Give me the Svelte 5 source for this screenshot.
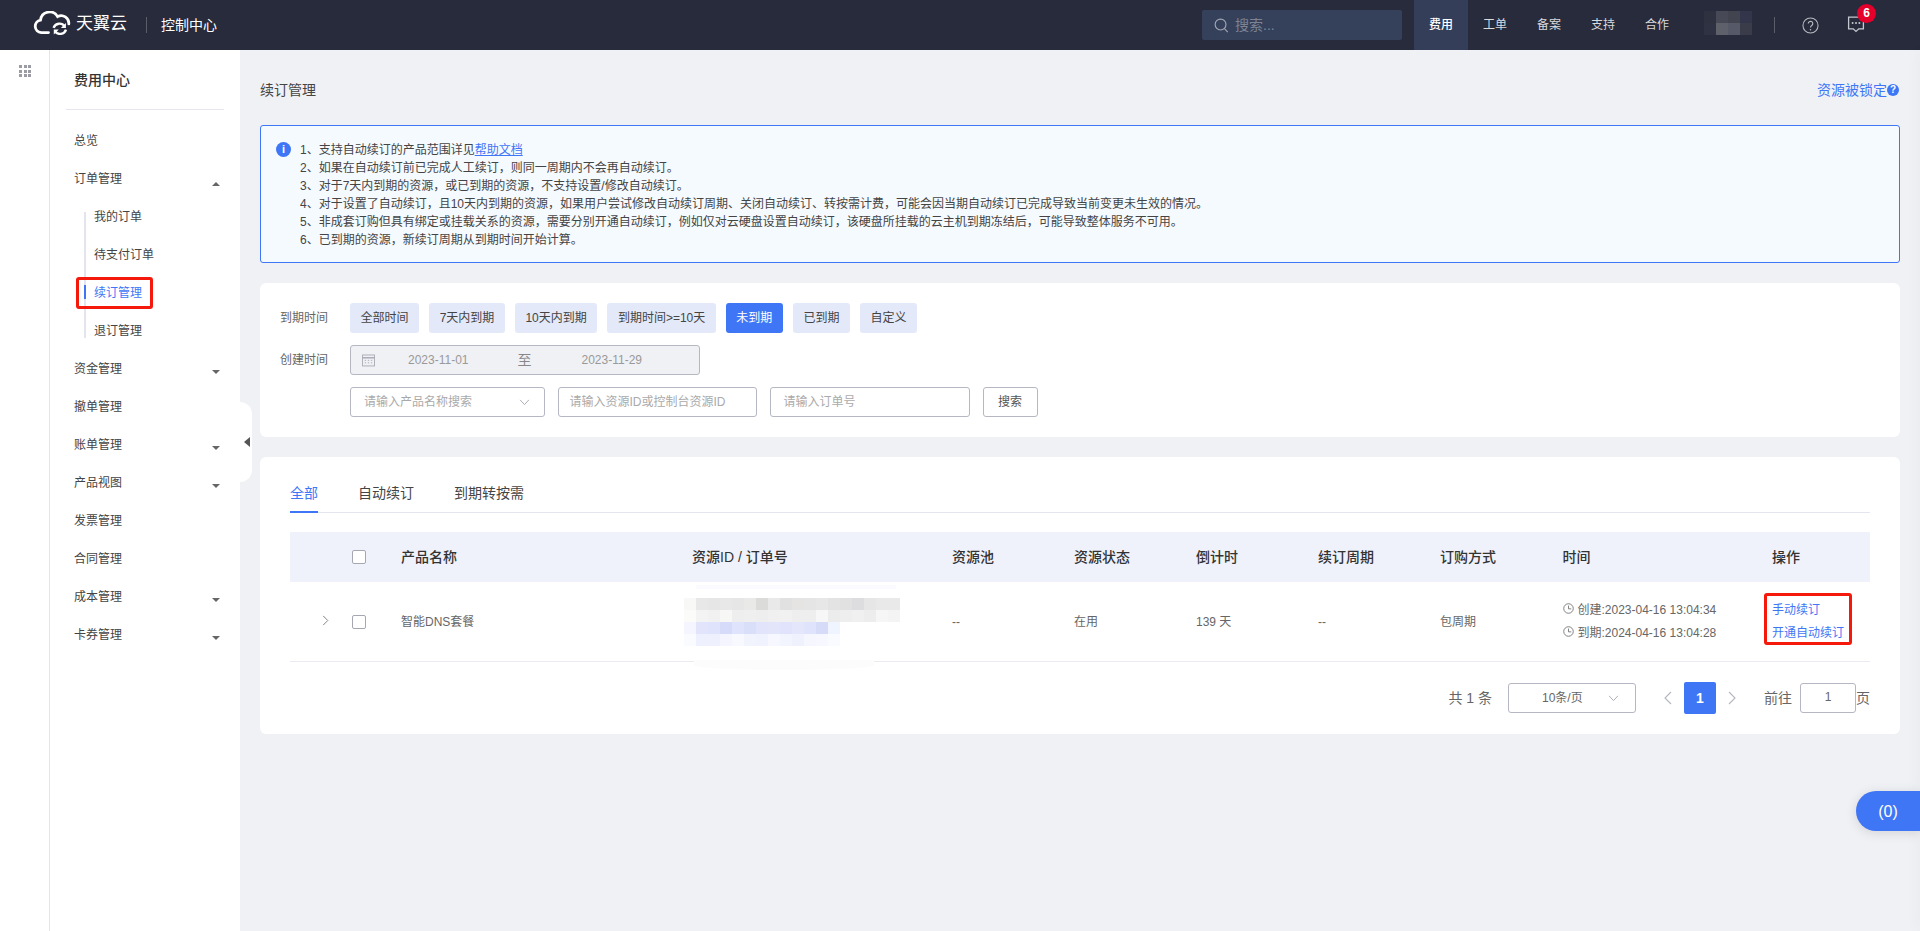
<script>
  const menu = [
    { label: '总览' },
    { label: '订单管理', caret: 'up', children: ['我的订单', '待支付订单', '续订管理', '退订管理'] },
    { label: '资金管理', caret: 'down' },
    { label: '撤单管理' },
    { label: '账单管理', caret: 'down' },
    { label: '产品视图', caret: 'down' },
    { label: '发票管理' },
    { label: '合同管理' },
    { label: '成本管理', caret: 'down' },
    { label: '卡券管理', caret: 'down' }
  ];
  const notes = [
    '2、如果在自动续订前已完成人工续订，则同一周期内不会再自动续订。',
    '3、对于7天内到期的资源，或已到期的资源，不支持设置/修改自动续订。',
    '4、对于设置了自动续订，且10天内到期的资源，如果用户尝试修改自动续订周期、关闭自动续订、转按需计费，可能会因当期自动续订已完成导致当前变更未生效的情况。',
    '5、非成套订购但具有绑定或挂载关系的资源，需要分别开通自动续订，例如仅对云硬盘设置自动续订，该硬盘所挂载的云主机到期冻结后，可能导致整体服务不可用。',
    '6、已到期的资源，新续订周期从到期时间开始计算。'
  ];
  const ranges = ['全部时间', '7天内到期', '10天内到期', '到期时间>=10天', '未到期', '已到期', '自定义'];
  const heads = ['产品名称', '资源ID / 订单号', '资源池', '资源状态', '倒计时', '续订周期', '订购方式', '时间', '操作'];
  const nav = ['费用', '工单', '备案', '支持', '合作'];
  const mosaicGray = [
    ['#f8f8f7','#e8e8e8','#e6e6e6','#e8e8e8','#e6e6e6','#e9e9e8','#dbdbd9','#e9e9e9','#e1e1e2','#e5e4e3','#e5e5e5','#e7e7e7','#e3e3e3','#e1e1e1','#dddde0','#e6e6e6','#e9e9e9','#e9e9e9'],
    ['#fbfbfa','#f3f3f3','#f1f1f1','#f7f7f6','#eeeeee','#efefef','#eeeeee','#f0f0f0','#f1f1f1','#eeeeee','#eeeeee','#f7f7f7','#ececed','#eeeeee','#f0f0f0','#ededed','#f6f6f6','#f4f4f4']
  ];
  const mosaicBlue = [
    ['#f4f5fe','#e1e4fb','#dfe3fb','#d6dbf9','#dfe3fb','#d9def9','#e1e4fb','#e3e6fb','#e0e3fb','#e4e7fc','#dfe3fb','#d6dbf8','#f0f4ff'],
    ['#fafbff','#eef0fd','#eef0fd','#f4f5fe','#f8f9ff','#f1f3fd','#f0f2fd','#f7f8ff','#f2f4fe','#eff1fd','#f5f6fe','#f7f8ff','#fafbff']
  ];
  const avatar = ['#2d3140','#474a56','#42454f','#33364a','#2e3242','#5e6169','#565a68','#3a3c4a'];
</script>

<div class="page">
  <header class="topbar">
    <div class="brand">
      <svg class="logo" viewBox="0 0 38 24" aria-hidden="true">
        <path d="M15.5 21.6H8.2a6.3 6.3 0 0 1-.7-12.5A9.2 9.2 0 0 1 24.6 5.6a7.6 7.6 0 0 1 11.2 7.2" fill="none" stroke="#fff" stroke-width="2.8" stroke-linecap="round"/>
        <path d="M20.6 16.8a6.2 6.2 0 0 1 11-1.4M33 18.6a6.2 6.2 0 0 1-11 1.6" fill="none" stroke="#fff" stroke-width="2.4"/>
        <path d="M32.9 11.9v5h-5zM20.8 23.4v-5h5z" fill="#fff"/>
      </svg>
      <span class="brand-name">天翼云</span>
      <i class="bar-line brand-line"></i>
      <span class="console">控制中心</span>
    </div>
    <div class="top-right">
      <div class="search">
        <svg viewBox="0 0 16 16" width="15" height="15" aria-hidden="true"><circle cx="7" cy="7" r="5.8" fill="none" stroke="#a3a8b4" stroke-width="1.2"/><path d="M11.2 11.4 14.6 15" stroke="#a3a8b4" stroke-width="1.2"/></svg>
        <span>搜索...</span>
      </div>
      <nav class="nav">
        {#each nav as n, i}
          <a class:on={i === 0} href="#top">{n}</a>
        {/each}
      </nav>
      <div class="avatar">
        {#each avatar as c}<i style="background:{c}"></i>{/each}
      </div>
      <i class="bar-line user-line"></i>
      <svg class="help" viewBox="0 0 18 18" width="17" height="17" aria-hidden="true"><circle cx="9" cy="9" r="8" fill="none" stroke="#b9bbc3" stroke-width="1.1"/><path d="M6.6 7a2.4 2.4 0 1 1 3.7 2c-.9.6-1.3 1-1.3 2.2" fill="none" stroke="#b9bbc3" stroke-width="1.2"/><circle cx="9" cy="13.4" r=".8" fill="#b9bbc3"/></svg>
      <div class="msg">
        <svg viewBox="0 0 18 18" width="18" height="18" aria-hidden="true"><path d="M1.6 2.2h14.8v11.6h-4.7L9 16.4l-2.7-2.6H1.6z" fill="none" stroke="#c6c8cf" stroke-width="1.3"/><circle cx="5.6" cy="8" r="1" fill="#c6c8cf"/><circle cx="9" cy="8" r="1" fill="#c6c8cf"/><circle cx="12.4" cy="8" r="1" fill="#c6c8cf"/></svg>
        <b class="badge">6</b>
      </div>
    </div>
  </header>

  <div class="body">
    <div class="rail">
      <div class="apps">{#each Array(9) as _}<i></i>{/each}</div>
    </div>

    <aside class="side">
      <div class="side-title"><span>费用中心</span></div>
      <ul class="menu">
        {#each menu as m}
          <li>
            <div class="item">
              <span>{m.label}</span>
              {#if m.caret}<i class="caret {m.caret}"></i>{/if}
            </div>
            {#if m.children}
              <ul class="sub">
                {#each m.children as c}
                  <li class:active={c === '续订管理'}>{c}</li>
                {/each}
              </ul>
            {/if}
          </li>
        {/each}
      </ul>
      <div class="handle"><i></i></div>
    </aside>

    <main class="main">
      <div class="title-row">
        <h1>续订管理</h1>
        <a class="locked" href="#top">资源被锁定<b>?</b></a>
      </div>

      <section class="alert">
        <span class="info">i</span>
        <div class="notes">
          <p>1、支持自动续订的产品范围详见<a href="#top">帮助文档</a></p>
          {#each notes as n}<p>{n}</p>{/each}
        </div>
      </section>

      <section class="card filter">
        <div class="f-row">
          <label for="r0">到期时间</label>
          <div class="ranges" id="r0">
            {#each ranges as r}
              <button class:sel={r === '未到期'}>{r}</button>
            {/each}
          </div>
        </div>
        <div class="f-row">
          <label for="d0">创建时间</label>
          <div class="dates" id="d0">
            <svg viewBox="0 0 14 14" width="13" height="14" aria-hidden="true"><rect x=".6" y="1.6" width="12.8" height="11.8" fill="none" stroke="#a9abb5"/><path d="M.6 4.6h12.8" stroke="#a9abb5" stroke-width="1.6"/><path d="M3 7.4h1.4M6.3 7.4h1.4M9.6 7.4h1.4M3 10h1.4M6.3 10h1.4M9.6 10h1.4" stroke="#a9abb5"/></svg>
            <span class="d1">2023-11-01</span>
            <span class="to">至</span>
            <span class="d2">2023-11-29</span>
          </div>
        </div>
        <div class="f-row">
          <span class="lab-empty"></span>
          <div class="fields">
            <div class="field sel1"><span>请输入产品名称搜索</span>
              <svg viewBox="0 0 12 8" width="11" height="7" aria-hidden="true"><path d="M1 1l5 5.4L11 1" fill="none" stroke="#a9abb5" stroke-width="1.1"/></svg>
            </div>
            <div class="field f2"><span>请输入资源ID或控制台资源ID</span></div>
            <div class="field f3"><span>请输入订单号</span></div>
            <button class="go">搜索</button>
          </div>
        </div>
      </section>

      <section class="card list">
        <div class="tabs">
          <span class="tab on">全部</span>
          <span class="tab">自动续订</span>
          <span class="tab">到期转按需</span>
        </div>

        <div class="grid head">
          <span></span>
          <i class="check"></i>
          {#each heads as h}<span>{h}</span>{/each}
        </div>

        <div class="grid row">
          <svg class="expand" viewBox="0 0 7 12" width="7" height="11" aria-hidden="true"><path d="M1 1l5 5-5 5" fill="none" stroke="#777" stroke-width="1"/></svg>
          <i class="check"></i>
          <span>智能DNS套餐</span>
          <div class="mosaic">
            <div class="halo top"></div>
            {#each mosaicGray as r}
              <div class="m-row">{#each r as c}<i style="background:{c}"></i>{/each}</div>
            {/each}
            {#each mosaicBlue as r}
              <div class="m-row">{#each r as c}<i style="background:{c}"></i>{/each}</div>
            {/each}
            <div class="halo bot"></div>
          </div>
          <span>--</span>
          <span>在用</span>
          <span>139 天</span>
          <span>--</span>
          <span>包周期</span>
          <div class="times">
            <div>
              <svg viewBox="0 0 12 12" width="11" height="11" aria-hidden="true"><circle cx="6" cy="6" r="5.2" fill="none" stroke="#777"/><path d="M6 2.8V6.4H9" fill="none" stroke="#777"/></svg>
              创建:2023-04-16 13:04:34
            </div>
            <div>
              <svg viewBox="0 0 12 12" width="11" height="11" aria-hidden="true"><circle cx="6" cy="6" r="5.2" fill="none" stroke="#777"/><path d="M6 2.8V6.4H9" fill="none" stroke="#777"/></svg>
              到期:2024-04-16 13:04:28
            </div>
          </div>
          <div class="ops">
            <a href="#top">手动续订</a>
            <a href="#top">开通自动续订</a>
          </div>
        </div>

        <div class="pager">
          <span class="total">共 1 条</span>
          <div class="p-size"><span>10条/页</span>
            <svg viewBox="0 0 12 8" width="11" height="7" aria-hidden="true"><path d="M1 1l5 5.4L11 1" fill="none" stroke="#a9abb5" stroke-width="1.1"/></svg>
          </div>
          <span class="p-arrow"><svg viewBox="0 0 8 14" width="8" height="14" aria-hidden="true"><path d="M7 1 1 7l6 6" fill="none" stroke="#b4b6bf" stroke-width="1.1"/></svg></span>
          <b class="p-cur">1</b>
          <span class="p-arrow"><svg viewBox="0 0 8 14" width="8" height="14" aria-hidden="true"><path d="M1 1l6 6-6 6" fill="none" stroke="#b4b6bf" stroke-width="1.1"/></svg></span>
          <span class="goto">前往</span>
          <span class="p-input">1</span>
          <span class="page-unit">页</span>
        </div>
      </section>
    </main>
  </div>

  <div class="edge"></div>
  <div class="cart">(0)</div>
</div>

<style>
  :global(body) {
    margin: 0;
    background: #f0f1f5;
  }
  *,
  *::before,
  *::after {
    box-sizing: border-box;
  }
  a {
    text-decoration: none;
    color: inherit;
  }
  i {
    display: block;
    font-style: normal;
  }
  .page {
    position: relative;
    width: 1920px;
    height: 931px;
    overflow: hidden;
    font: 12px/18px "Liberation Sans", "Noto Sans CJK SC", sans-serif;
    color: #444;
    background: #f0f1f5;
  }

  /* top bar */
  .topbar {
    display: flex;
    justify-content: space-between;
    height: 50px;
    background: #272b3b;
  }
  .brand {
    display: flex;
    align-items: center;
    padding-left: 33px;
    color: #fff;
  }
  .logo {
    width: 38px;
    height: 24px;
    margin-top: -4px;
  }
  .brand-name {
    margin-left: 5px;
    font-size: 17px;
    line-height: 24px;
    margin-top: -2px;
  }
  .bar-line {
    width: 1px;
    height: 16px;
    background: #5a5e6b;
  }
  .brand-line {
    margin-left: 19px;
  }
  .console {
    margin-left: 14px;
    font-size: 14px;
  }
  .top-right {
    display: flex;
    align-items: center;
    padding-right: 55px;
  }
  .search {
    display: flex;
    align-items: center;
    gap: 6px;
    width: 200px;
    height: 30px;
    padding-left: 12px;
    border-radius: 2px;
    background: #35405a;
    color: #7d8393;
    font-size: 14px;
  }
  .nav {
    display: flex;
    align-self: stretch;
    margin-left: 12px;
  }
  .nav a {
    width: 54px;
    line-height: 50px;
    text-align: center;
    color: #d9dade;
  }
  .nav a.on {
    background: #343e58;
    color: #fff;
    font-weight: 500;
  }
  .avatar {
    display: grid;
    grid-template-columns: repeat(4, 12px);
    grid-auto-rows: 12px;
    margin-left: 20px;
    margin-bottom: 4px;
  }
  .user-line {
    margin-left: 22px;
  }
  .help {
    margin-left: 27px;
  }
  .msg {
    position: relative;
    display: flex;
    margin-left: 28px;
    margin-bottom: 2px;
  }
  .badge {
    position: absolute;
    left: 10px;
    top: -11px;
    width: 19px;
    height: 19px;
    border-radius: 50%;
    background: #e4002b;
    color: #fff;
    font-size: 12px;
    line-height: 19px;
    text-align: center;
  }

  /* layout */
  .body {
    display: flex;
    height: 881px;
  }
  .rail {
    flex: none;
    width: 50px;
    padding: 15px 0 0 19px;
    background: #fff;
    border-right: 1px solid #e4e5ec;
  }
  .apps {
    display: grid;
    grid-template-columns: repeat(3, 3px);
    grid-auto-rows: 3px;
    gap: 1.5px;
  }
  .apps i {
    background: #9a9ba3;
  }

  /* sidebar */
  .side {
    position: relative;
    flex: none;
    width: 190px;
    padding: 0 16px;
    background: #fff;
  }
  .side-title {
    height: 60px;
    padding: 15px 0 0 8px;
    border-bottom: 1px solid #e6e6ee;
    font-size: 14px;
    font-weight: 500;
    line-height: 30px;
    color: #333;
  }
  .menu,
  .sub {
    margin: 0;
    padding: 0;
    list-style: none;
  }
  .menu {
    padding-top: 12px;
  }
  .item {
    display: flex;
    align-items: center;
    justify-content: space-between;
    height: 38px;
    padding: 0 4px 0 8px;
    color: #444;
  }
  .caret {
    width: 0;
    height: 0;
    border-left: 4px solid transparent;
    border-right: 4px solid transparent;
  }
  .caret.down {
    margin-top: 5px;
    border-top: 4px solid #666;
  }
  .caret.up {
    margin-top: 9px;
    border-bottom: 4px solid #666;
  }
  .sub {
    position: relative;
    padding-left: 28px;
  }
  .sub::before {
    content: "";
    position: absolute;
    left: 18px;
    top: 14px;
    bottom: 12px;
    width: 2px;
    background: #e3e4ee;
  }
  .sub li {
    position: relative;
    height: 38px;
    line-height: 38px;
    color: #444;
  }
  .sub li.active {
    color: #3f76f6;
  }
  .sub li.active::before {
    content: "";
    position: absolute;
    left: -10px;
    top: 11px;
    width: 2px;
    height: 14px;
    background: #3f76f6;
  }
  .sub li.active::after {
    content: "";
    position: absolute;
    left: -18px;
    top: 3px;
    width: 77px;
    height: 32px;
    border: 3px solid #f5190b;
    border-radius: 3px;
  }
  .handle {
    position: absolute;
    left: 190px;
    top: 352px;
    display: flex;
    align-items: center;
    width: 12px;
    height: 80px;
    padding-left: 4px;
    border-radius: 0 12px 12px 0;
    background: #fff;
    z-index: 2;
  }
  .handle i {
    width: 0;
    height: 0;
    border-top: 5px solid transparent;
    border-bottom: 5px solid transparent;
    border-right: 6px solid #555;
  }

  /* main */
  .main {
    flex: 1;
    min-width: 0;
    padding: 27px 20px 0;
  }
  .title-row {
    display: flex;
    align-items: center;
    justify-content: space-between;
    height: 26px;
    margin-bottom: 22px;
  }
  h1 {
    margin: 0;
    font-size: 14px;
    font-weight: 400;
    color: #444;
  }
  .locked {
    display: flex;
    align-items: center;
    padding-right: 1px;
    font-size: 14px;
    color: #3f76f6;
  }
  .locked b {
    width: 12px;
    height: 12px;
    border-radius: 50%;
    background: #3f76f6;
    color: #fff;
    font-size: 10px;
    line-height: 12px;
    text-align: center;
  }
  .alert {
    display: flex;
    height: 138px;
    padding: 15px 15px 0;
    border: 1px solid #3f76f6;
    border-radius: 3px;
    background: #f5faff;
  }
  .info {
    flex: none;
    width: 15px;
    height: 15px;
    margin: 1px 9px 0 0;
    border-radius: 50%;
    background: #3f76f6;
    color: #fff;
    font-size: 11px;
    font-weight: 700;
    line-height: 15px;
    text-align: center;
  }
  .notes p {
    margin: 0;
    line-height: 18px;
    color: #444;
  }
  .notes a {
    color: #3f76f6;
    text-decoration: underline;
  }

  .card {
    border-radius: 6px;
    background: #fff;
  }
  .filter {
    height: 154px;
    margin-top: 20px;
    padding: 20px;
  }
  .f-row {
    display: flex;
    align-items: center;
    height: 30px;
    margin-bottom: 12px;
  }
  .f-row label,
  .lab-empty {
    flex: none;
    width: 70px;
    color: #666;
  }
  .ranges {
    display: flex;
    gap: 10px;
  }
  .ranges button {
    height: 30px;
    padding: 0 10.55px;
    border: 0;
    border-radius: 3px;
    background: #e3e9f9;
    color: #444;
    font: inherit;
  }
  .ranges button.sel {
    background: #3f76f6;
    color: #fff;
  }
  .dates {
    display: flex;
    align-items: center;
    width: 350px;
    height: 30px;
    padding-left: 11px;
    border: 1px solid #b5b7c2;
    border-radius: 3px;
    background: #f0f1f5;
    color: #999;
  }
  .d1 {
    margin-left: 33px;
  }
  .to {
    margin-left: 49px;
    font-size: 14px;
    color: #888;
  }
  .d2 {
    margin-left: 50px;
  }
  .fields {
    display: flex;
    gap: 13px;
  }
  .field {
    display: flex;
    align-items: center;
    justify-content: space-between;
    height: 30px;
    border: 1px solid #b5b7c2;
    border-radius: 3px;
    color: #aaa;
  }
  .sel1 {
    width: 194.5px;
    padding: 0 14px 0 13px;
  }
  .f2 {
    width: 199px;
    padding: 0 11px;
  }
  .f3 {
    width: 200px;
    padding: 0 13px;
  }
  .go {
    width: 55px;
    height: 30px;
    border: 1px solid #b5b7c2;
    border-radius: 3px;
    background: #fff;
    color: #555;
    font: inherit;
  }

  .list {
    height: 277px;
    margin-top: 20px;
    padding: 0 30px;
  }
  .tabs {
    display: flex;
    gap: 40px;
    height: 56px;
    margin-bottom: 19px;
    border-bottom: 1px solid #e4e6ee;
    font-size: 14px;
  }
  .tab {
    height: 56px;
    padding-top: 27px;
    line-height: 18px;
    color: #444;
  }
  .tab.on {
    color: #3f76f6;
    border-bottom: 2px solid #3f76f6;
  }
  .grid {
    display: grid;
    grid-template-columns: 62px 49px 291px 260px 122px 122px 122px 122px 122.5px 209.5px 98px;
    align-items: center;
  }
  .head {
    height: 50px;
    padding-bottom: 1px;
    background: #eff2fb;
    font-size: 14px;
    font-weight: 500;
    color: #333;
  }
  .row {
    height: 80px;
    border-bottom: 1px solid #ebecf1;
    color: #666;
  }
  .check {
    width: 14px;
    height: 14px;
    border: 1px solid #a5a7b2;
    border-radius: 2px;
    background: #fff;
  }
  .expand {
    margin-left: 32px;
    margin-top: -2px;
  }
  .mosaic {
    position: relative;
    margin-left: -8.5px;
  }
  .m-row {
    display: flex;
  }
  .m-row i {
    width: 12px;
    height: 12px;
  }
  .halo {
    position: absolute;
    height: 4px;
  }
  .halo.top {
    left: 12px;
    top: -13px;
    width: 200px;
    background: #fafaff;
  }
  .halo.bot {
    left: 10px;
    top: 62px;
    width: 180px;
    height: 10px;
    border-radius: 0 0 50% 50%;
    background: #fcfcfc;
  }
  .times div {
    display: flex;
    align-items: center;
    gap: 4px;
    height: 23px;
    white-space: nowrap;
  }
  .times svg {
    margin-top: -3px;
  }
  .ops {
    position: relative;
  }
  .ops::after {
    content: "";
    position: absolute;
    left: -8px;
    top: -6px;
    width: 88px;
    height: 52px;
    border: 3px solid #f5190b;
    border-radius: 3px;
  }
  .ops a {
    display: block;
    height: 23px;
    line-height: 23px;
    color: #3f76f6;
    white-space: nowrap;
  }
  .pager {
    display: flex;
    align-items: center;
    justify-content: flex-end;
    padding-top: 20px;
    color: #666;
  }
  .total,
  .goto,
  .page-unit {
    font-size: 14px;
  }
  .p-size {
    display: flex;
    align-items: center;
    justify-content: space-between;
    width: 128px;
    height: 30px;
    margin-left: 16px;
    padding: 0 16px 0 33px;
    border: 1px solid #b5b7c2;
    border-radius: 3px;
  }
  .p-arrow {
    display: flex;
    align-items: center;
    justify-content: center;
    width: 32px;
    height: 32px;
  }
  .p-size + .p-arrow {
    margin-left: 16px;
  }
  .p-cur {
    width: 32px;
    height: 32px;
    border-radius: 2px;
    background: #3f76f6;
    color: #fff;
    font-size: 14px;
    line-height: 32px;
    text-align: center;
  }
  .goto {
    margin-left: 16px;
  }
  .p-input {
    width: 56px;
    height: 30px;
    margin-left: 8px;
    border: 1px solid #b5b7c2;
    border-radius: 3px;
    line-height: 26px;
    text-align: center;
  }

  /* overlays */
  .edge {
    position: absolute;
    top: 50px;
    bottom: 0;
    right: -2px;
    width: 2px;
    box-shadow: 0 0 14px rgba(0, 0, 0, 0.14);
  }
  .cart {
    position: absolute;
    right: 0;
    top: 791px;
    width: 64px;
    height: 40px;
    border-radius: 20px 0 0 20px;
    background: #3f76f6;
    box-shadow: 0 2px 12px rgba(0, 0, 0, 0.12);
    color: #fff;
    font-size: 16px;
    line-height: 41px;
    text-align: center;
  }
</style>
